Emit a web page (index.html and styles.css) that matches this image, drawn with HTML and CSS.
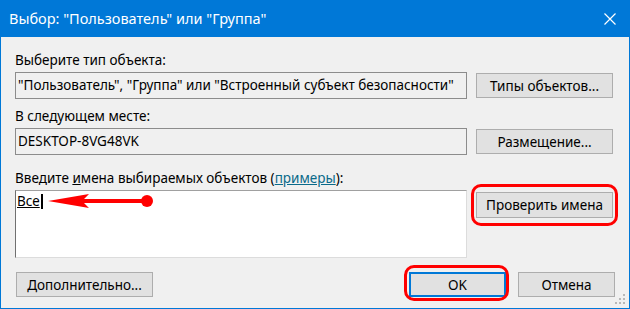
FILE: index.html
```html
<!DOCTYPE html>
<html lang="ru">
<head>
  <meta charset="UTF-8">
  <title>Выбор: "Пользователь" или "Группа"</title>
  <link rel="stylesheet" href="styles.css">
</head>
<body>

  <div class="window">
    <div class="titlebar">
      <span class="title">Выбор: "Пользователь" или "Группа"</span>
      <svg class="close" width="12" height="12" viewBox="0 0 12 12">
        <path d="M0.5 0.5 L11.5 11.5 M11.5 0.5 L0.5 11.5" stroke="#fff" stroke-width="1.2" fill="none"/>
      </svg>
    </div>

    <div class="content">
      <div class="label first">Выберите тип объекта:</div>
      <div class="row">
        <div class="field">"Пользователь", "Группа" или "Встроенный субъект безопасности"</div>
        <button class="btn">Типы объектов...</button>
      </div>

      <div class="label">В следующем месте:</div>
      <div class="row">
        <div class="field">DESKTOP-8VG48VK</div>
        <button class="btn">Размещение...</button>
      </div>

      <div class="label wide">Введите <u>и</u>мена выбираемых объектов (<a href="#" class="link">примеры</a>):</div>
      <div class="row top">
        <div class="names">
          <span class="entry">Все</span><span class="caret"></span>
          <svg class="arrow" width="110" height="20" viewBox="0 0 110 20">
            <path d="M1 10 L42 3 L37 8 L100 8 L100 12 L37 12 L42 17 Z" fill="#f00"/>
            <circle cx="100" cy="10" r="6" fill="#f00"/>
          </svg>
        </div>
        <button class="btn check marked">Проверить имена</button>
      </div>

      <div class="footer">
        <button class="btn">Дополнительно...</button>
        <div class="actions">
          <button class="btn default marked">OK</button>
          <button class="btn">Отмена</button>
        </div>
      </div>
    </div>

    <svg class="grip" width="12" height="12" viewBox="0 0 12 12">
      <rect x="8" y="0" width="2" height="2" fill="#b8b8b8"/>
      <rect x="4" y="4" width="2" height="2" fill="#b8b8b8"/>
      <rect x="8" y="4" width="2" height="2" fill="#b8b8b8"/>
      <rect x="0" y="8" width="2" height="2" fill="#b8b8b8"/>
      <rect x="4" y="8" width="2" height="2" fill="#b8b8b8"/>
      <rect x="8" y="8" width="2" height="2" fill="#b8b8b8"/>
    </svg>
  </div>

</body>
</html>
```

FILE: styles.css
```css
body {
  margin: 0;
  padding: 0;
  background: #f0f0f0;
  font-family: 'Noto Sans', sans-serif;
  font-size: 13.5px;
  color: #000;
}
.window {
  position: relative;
  width: 630px;
  height: 309px;
  box-sizing: border-box;
  border: 1px solid #0078d7;
  border-top: none;
  background: #f0f0f0;
}
.titlebar {
  height: 37px;
  background: #0078d7;
  color: #fff;
  display: flex;
  align-items: center;
  justify-content: space-between;
  padding: 0 14px 0 9px;
  margin: 0 -1px;
}
.title {
  font-size: 14.5px;
  margin-top: -1px;
}
.close {
  display: block;
}
.content {
  padding: 0 14px;
}
.label {
  height: 18px;
  line-height: 18px;
  margin-top: 8px;
  margin-bottom: 3px;
}
.label.first {
  margin-top: 14px;
}
.label.wide {
  margin-top: 14px;
}
.link {
  color: #0a6a8a;
}
.row {
  display: flex;
  align-items: center;
  gap: 9px;
}
.row.top {
  align-items: flex-start;
}
.field {
  width: 452px;
  height: 27px;
  box-sizing: border-box;
  border: 1px solid #8c8c8c;
  padding: 0 2px;
  line-height: 25px;
  white-space: nowrap;
  overflow: hidden;
}
.btn {
  font-family: inherit;
  font-size: 13.5px;
  color: #000;
  background: #e1e1e1;
  border: 1px solid #adadad;
  width: 137px;
  height: 25px;
  padding: 0;
  position: relative;
}
.names {
  position: relative;
  width: 452px;
  height: 68px;
  box-sizing: border-box;
  background: #fff;
  border: 1px solid #dcdcdc;
  border-top-color: #a0a0a0;
  border-left-color: #707070;
  padding: 1px 1px;
  line-height: 18px;
}
.entry {
  text-decoration: underline;
}
.caret {
  display: inline-block;
  width: 2px;
  height: 15px;
  background: #000;
  vertical-align: -3px;
  margin-left: 1px;
}
.arrow {
  position: absolute;
  left: 31px;
  top: 0;
}
.check {
  margin-top: 2px;
  height: 26px;
}
.marked::after {
  content: '';
  position: absolute;
  top: -9px;
  bottom: -9px;
  left: -6px;
  right: -6px;
  border: 3px solid #f00;
  border-radius: 10px;
}
.footer {
  display: flex;
  justify-content: space-between;
  margin-top: 14px;
}
.footer .btn {
  margin-left: 1px;
}
.actions {
  display: flex;
  gap: 11px;
}
.actions .btn {
  width: 97px;
}
.default {
  border: 2px solid #0078d7;
}
.default.marked::after {
  top: -9px;
  bottom: -6px;
  left: -7px;
  right: -5px;
}
.grip {
  position: absolute;
  right: 2px;
  bottom: 2px;
}
```
